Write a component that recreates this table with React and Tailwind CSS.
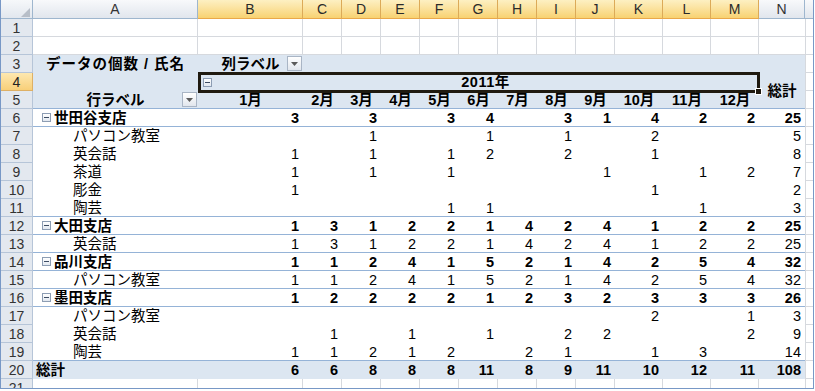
import React from 'react';

const FONT = "font-['Liberation_Sans','Noto_Sans_CJK_JP','Noto_Sans_CJK_SC',sans-serif]";
const LETTERS = ['A', 'B', 'C', 'D', 'E', 'F', 'G', 'H', 'I', 'J', 'K', 'L', 'M', 'N'];
const MONTHS = ['1月', '2月', '3月', '4月', '5月', '6月', '7月', '8月', '9月', '10月', '11月', '12月'];
const E = '';

const BODY = [
  { n: 6, g: true, line: true, label: '世田谷支店', v: [3, E, 3, E, 3, 4, E, 3, 1, 4, 2, 2, 25] },
  { n: 7, label: 'パソコン教室', v: [E, E, 1, E, E, 1, E, 1, E, 2, E, E, 5] },
  { n: 8, label: '英会話', v: [1, E, 1, E, 1, 2, E, 2, E, 1, E, E, 8] },
  { n: 9, label: '茶道', v: [1, E, 1, E, 1, E, E, E, 1, E, 1, 2, 7] },
  { n: 10, label: '彫金', v: [1, E, E, E, E, E, E, E, E, 1, E, E, 2] },
  { n: 11, line: true, label: '陶芸', v: [E, E, E, E, 1, 1, E, E, E, E, 1, E, 3] },
  { n: 12, g: true, line: true, label: '大田支店', v: [1, 3, 1, 2, 2, 1, 4, 2, 4, 1, 2, 2, 25] },
  { n: 13, line: true, label: '英会話', v: [1, 3, 1, 2, 2, 1, 4, 2, 4, 1, 2, 2, 25] },
  { n: 14, g: true, line: true, label: '品川支店', v: [1, 1, 2, 4, 1, 5, 2, 1, 4, 2, 5, 4, 32] },
  { n: 15, line: true, label: 'パソコン教室', v: [1, 1, 2, 4, 1, 5, 2, 1, 4, 2, 5, 4, 32] },
  { n: 16, g: true, line: true, label: '墨田支店', v: [1, 2, 2, 2, 2, 1, 2, 3, 2, 3, 3, 3, 26] },
  { n: 17, label: 'パソコン教室', v: [E, E, E, E, E, E, E, E, E, 2, E, 1, 3] },
  { n: 18, label: '英会話', v: [E, 1, E, 1, E, 1, E, 2, 2, E, E, 2, 9] },
  { n: 19, line: true, label: '陶芸', v: [1, 1, 2, 1, 2, E, 2, 1, E, 1, 3, E, 14] },
];
const TOTAL = [6, 6, 8, 8, 8, 11, 8, 9, 11, 10, 12, 11, 108];

function RowHead({ n, sel }) {
  return (
    <div
      className={
        sel
          ? 'flex items-center justify-center border-r border-b border-[#deb065] bg-linear-to-b from-[#fde8b0] to-[#f8cf78] text-[14px] font-normal text-[#222]'
          : 'flex items-center justify-center border-r border-b border-[#b6c5d8] bg-[#e3e8ef] text-[14px] font-normal text-[#333]'
      }
    >
      {n}
    </div>
  );
}

function ColCell() {
  return <div className="border-l border-b border-[#d6d9de] bg-white" />;
}

function Collapse() {
  return (
    <span className="inline-flex h-[9px] w-[9px] shrink-0 items-center justify-center border border-[#8d9db3] bg-linear-to-b from-[#ffffff] to-[#e2e8f0]">
      <span className="h-px w-[5px] bg-[#3d4c63]" />
    </span>
  );
}

function Drop({ className }) {
  return (
    <span
      className={`absolute flex h-[15px] w-[15px] items-center justify-center border border-[#a9b5c5] bg-linear-to-b from-[#ffffff] to-[#e1e6ed] ${className}`}
    >
      <svg width="7" height="4" viewBox="0 0 7 4">
        <path d="M0 0H7L3.5 4Z" fill="#5a5a5a" />
      </svg>
    </span>
  );
}

function PlainRow({ n }) {
  return (
    <>
      <RowHead n={n} />
      {LETTERS.map((l) => (
        <div
          key={l}
          className={l === 'N' ? 'border-b border-[#d6d9de] bg-white' : 'border-r border-b border-[#d6d9de] bg-white'}
        />
      ))}
      <ColCell />
    </>
  );
}

export default function App() {
  return (
    <div className={`h-[391px] w-[815px] overflow-hidden bg-white ${FONT}`}>
      <div className="h-[389px] w-[814px] overflow-hidden border-r border-b border-l border-[#7898c6]">
        <div className="grid grid-cols-[32px_165px_105px_repeat(8,39px)_repeat(3,48px)_46px_8px] grid-rows-[19px_repeat(21,18px)] text-[14.5px] leading-[16px] text-black">
          {/* column header row */}
          <div className="flex items-end justify-end border-r border-b border-[#9eb6ce] bg-linear-to-b from-[#f6f8fa] to-[#e2e7ee] pr-[2px] pb-[1px]">
            <svg width="9" height="9" viewBox="0 0 9 9">
              <path d="M9 0V9H0Z" fill="#b7bec8" />
            </svg>
          </div>
          {LETTERS.map((l) => {
            const sel = l !== 'A' && l !== 'N';
            return (
              <div
                key={l}
                className={
                  sel
                    ? 'flex items-center justify-center border-r border-b border-r-[#dcaa58] border-b-[#eaa84a] bg-linear-to-b from-[#fdf0c2] to-[#f8d271] text-[14px] text-[#2a2a2a]'
                    : 'flex items-center justify-center border-r border-b border-[#9eb6ce] bg-linear-to-b from-[#f8f9fb] to-[#e1e6ed] text-[14px] text-[#333]'
                }
              >
                {l}
              </div>
            );
          })}
          <div className="border-b border-[#9eb6ce] bg-linear-to-b from-[#f8f9fb] to-[#e1e6ed]" />

          {/* rows 1-2 */}
          <PlainRow n={1} />
          <PlainRow n={2} />

          {/* row 3 */}
          <RowHead n={3} />
          <div className="flex items-center justify-center bg-[#dce6f1] font-bold tracking-[1px]">データの個数 / 氏名</div>
          <div className="relative flex items-center justify-center bg-[#dce6f1] font-bold">
            列ラベル
            <Drop className="top-[1px] right-[1px]" />
          </div>
          {LETTERS.slice(2).map((l) => (
            <div key={l} className="bg-[#dce6f1]" />
          ))}
          <ColCell />

          {/* row 4 */}
          <RowHead n={4} sel />
          <div className="bg-[#dce6f1]" />
          <div className="relative col-span-12 flex items-center bg-[#dce6f1] pl-[5px]">
            <Collapse />
            <span className="flex-1 text-center font-bold tracking-[0.5px]">2011年</span>
            <div className="pointer-events-none absolute top-[-1px] right-[-1px] bottom-[-2px] left-0 z-10 border-[3px] border-[#1f1a10]">
              <div className="absolute right-[-5px] bottom-[-5px] h-[7px] w-[7px] border border-white bg-[#1f1a10]" />
            </div>
          </div>
          <div className="row-span-2 flex items-center justify-center border-b border-[#95b3d7] bg-[#dce6f1] font-bold">総計</div>
          <ColCell />

          {/* row 5 */}
          <RowHead n={5} />
          <div className="relative flex items-center justify-center border-b border-[#95b3d7] bg-[#dce6f1] font-bold">
            行ラベル
            <Drop className="top-[1px] right-[1px]" />
          </div>
          {MONTHS.map((m) => (
            <div key={m} className="flex items-center justify-center border-b border-[#95b3d7] bg-[#dce6f1] font-bold">
              {m}
            </div>
          ))}
          <ColCell />

          {/* body rows */}
          {BODY.map((r) => (
            <React.Fragment key={r.n}>
              <RowHead n={r.n} />
              <div
                className={`flex items-center bg-white ${r.line ? 'border-b border-[#95b3d7]' : ''} ${
                  r.g ? 'gap-[3px] pl-[9px] font-bold' : 'pl-[40px] font-normal'
                }`}
              >
                {r.g && <Collapse />}
                <span>{r.label}</span>
              </div>
              {r.v.map((val, i) => (
                <div
                  key={i}
                  className={`flex items-center justify-end bg-white pr-[4px] ${r.line ? 'border-b border-[#95b3d7]' : ''} ${
                    r.g ? 'font-bold' : 'font-normal'
                  }`}
                >
                  {val}
                </div>
              ))}
              <ColCell />
            </React.Fragment>
          ))}

          {/* row 20 totals */}
          <RowHead n={20} />
          <div className="flex items-center bg-[#dce6f1] pl-[3px] font-bold">総計</div>
          {TOTAL.map((val, i) => (
            <div key={i} className="flex items-center justify-end bg-[#dce6f1] pr-[4px] font-bold">
              {val}
            </div>
          ))}
          <ColCell />

          {/* row 21 */}
          <PlainRow n={21} />
        </div>
      </div>
    </div>
  );
}
